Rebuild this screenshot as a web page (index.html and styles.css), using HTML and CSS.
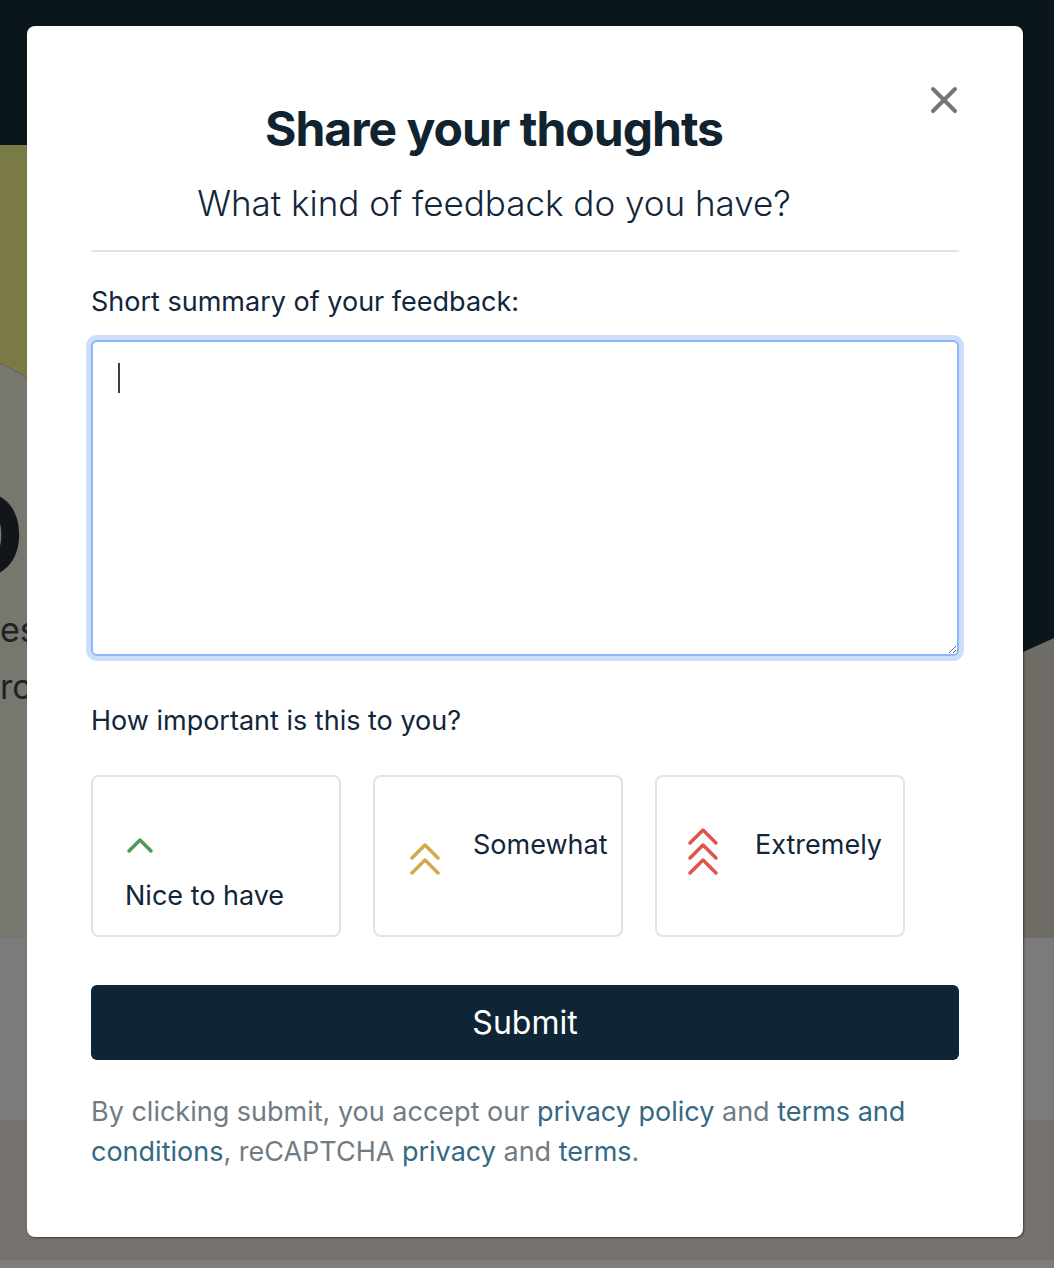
FILE: index.html
```html
<!DOCTYPE html>
<html lang="en">
<head>
<meta charset="utf-8">
<title>Share your thoughts</title>
<link rel="stylesheet" href="styles.css">
</head>
<body>
<div class="page">
  <header class="topbar"></header>
  <section class="hero">
    <svg class="hero-art" width="1054" height="793" viewBox="0 0 1054 793" aria-hidden="true">
      <rect x="0" y="0" width="1054" height="793" fill="#0b151c"/>
      <polygon points="0,0 527,0 527,492 0,218" fill="#797a45"/>
      <polygon points="0,218 527,492 527,793 0,793" fill="#78776f"/>
      <polygon points="527,492 1023,507 1054,493 1054,793 527,793" fill="#6f6b65"/>
    </svg>
    <div class="hero-copy">
      <h1 class="hero-title">D</h1>
      <p class="hero-text">es<br>rc</p>
    </div>
  </section>
  <section class="band band-a"></section>
  <section class="band band-b"></section>
  <section class="band band-c"></section>
</div>

<div class="modal" role="dialog" aria-labelledby="modal-title">
  <div class="modal-header">
    <div class="modal-titles">
      <h2 id="modal-title" class="modal-title">Share your thoughts</h2>
      <p class="modal-subtitle">What kind of feedback do you have?</p>
    </div>
    <button class="close-btn" type="button" aria-label="Close">
      <svg width="28" height="28" viewBox="0 0 28 28"><path d="M3 3 L25 25 M25 3 L3 25" stroke="#767676" stroke-width="4" stroke-linecap="round"/></svg>
    </button>
  </div>
  <hr class="divider">
  <form class="feedback-form">
    <label class="field-label" for="summary">Short summary of your feedback:</label>
    <div class="textarea-wrap">
      <textarea id="summary" class="summary"></textarea>
      <span class="caret"></span>
    </div>
    <p class="field-label field-label-2">How important is this to you?</p>
    <div class="options">
      <div class="option option-stacked">
        <svg class="chev" width="36" height="20" viewBox="0 0 36 20"><polyline points="6,15 17,4 28,15" fill="none" stroke="#4b9a5c" stroke-width="3.5" stroke-linecap="round" stroke-linejoin="round"/></svg>
        <span class="option-text">Nice to have</span>
      </div>
      <div class="option">
        <svg class="chev" width="36" height="48" viewBox="0 0 36 48"><polyline points="7,31 20,18 33,31" fill="none" stroke="#cfa94b" stroke-width="3.5" stroke-linecap="round" stroke-linejoin="round"/><polyline points="7,46 20,33 33,46" fill="none" stroke="#cfa94b" stroke-width="3.5" stroke-linecap="round" stroke-linejoin="round"/></svg>
        <span class="option-text">Somewhat</span>
      </div>
      <div class="option">
        <svg class="chev" width="36" height="48" viewBox="0 0 36 48"><polyline points="3,16 16,3 29,16" fill="none" stroke="#e1544a" stroke-width="3.5" stroke-linecap="round" stroke-linejoin="round"/><polyline points="3,31 16,18 29,31" fill="none" stroke="#e1544a" stroke-width="3.5" stroke-linecap="round" stroke-linejoin="round"/><polyline points="3,46 16,33 29,46" fill="none" stroke="#e1544a" stroke-width="3.5" stroke-linecap="round" stroke-linejoin="round"/></svg>
        <span class="option-text">Extremely</span>
      </div>
    </div>
    <button class="submit-btn" type="button">Submit</button>
    <p class="legal">By clicking submit, you accept our <a href="#">privacy policy</a> and <a href="#">terms and conditions</a>, reCAPTCHA <a href="#">privacy</a> and <a href="#">terms</a>.</p>
  </form>
</div>
</body>
</html>
```

FILE: styles.css
```css
* { box-sizing: border-box; }
html, body { margin: 0; padding: 0; }
body {
  width: 1054px;
  height: 1268px;
  overflow: hidden;
  position: relative;
  font-family: Inter, "Noto Sans", "Liberation Sans", sans-serif;
  color: #12263a;
}

/* background page */
.page { display: flex; flex-direction: column; }
.topbar { height: 145px; background: #0b151c; }
.hero { display: grid; height: 793px; overflow: hidden; }
.hero > * { grid-area: 1 / 1; }
.hero-art { display: block; }
.hero-copy { padding-top: 330px; margin-left: -62px; }
.hero-title {
  margin: 0;
  font-size: 120px;
  line-height: 1;
  font-weight: 700;
  color: #121618;
}
.hero-text {
  margin: 6px 0 0 62px;
  font-size: 34px;
  line-height: 57px;
  color: #1d2224;
}
.band-a { height: 182px; background: #7b7b7b; }
.band-b { height: 140px; background: #75726d; }
.band-c { height: 10px; background: #7d7d7d; }

/* modal */
.modal {
  position: absolute;
  top: 26px;
  left: 27px;
  width: 996px;
  height: 1211px;
  background: #fff;
  border-radius: 8px;
  box-shadow: 1px 1px 2px rgba(0, 0, 0, 0.45);
  padding: 60px 64px 0 64px;
}
.modal-header { display: flex; align-items: flex-start; }
.modal-titles { flex: 1; text-align: center; padding-top: 15px; }
.modal-title {
  margin: 0;
  font-size: 48px;
  line-height: 56px;
  font-weight: 700;
  letter-spacing: -1px;
  color: #10232f;
}
.modal-subtitle {
  margin: 24px 0 0;
  font-size: 35px;
  line-height: 44px;
  font-weight: 300;
  color: #12263a;
}
.close-btn {
  width: 62px;
  height: 28px;
  padding: 0;
  border: 0;
  background: none;
  display: flex;
  justify-content: flex-end;
  cursor: pointer;
}
.close-btn svg { display: block; margin-right: 1px; }
.divider {
  margin: 25px 0 0;
  border: 0;
  height: 2px;
  background: #e1e4e7;
}

.feedback-form { display: flex; flex-direction: column; }
.field-label {
  display: block;
  margin: 30px 0 0;
  font-size: 27px;
  line-height: 40px;
  font-weight: 400;
  color: #12263a;
}
.field-label-2 { margin-top: 45px; }
.textarea-wrap { position: relative; margin-top: 18px; }
.summary {
  display: block;
  width: 868px;
  height: 316px;
  border: 2px solid #8db6f6;
  border-radius: 6px;
  box-shadow: 0 0 0 5px #cddefc;
  outline: none;
  resize: vertical;
  padding: 20px 24px;
  font: inherit;
  font-size: 27px;
}
.caret {
  position: absolute;
  left: 27px;
  top: 23px;
  width: 2px;
  height: 30px;
  background: #3a3d42;
}

.options {
  display: grid;
  grid-template-columns: repeat(3, 250px);
  column-gap: 32px;
  margin-top: 34px;
}
.option {
  height: 162px;
  border: 2px solid #dfe2e6;
  border-radius: 8px;
  display: flex;
  align-items: flex-start;
  padding: 50px 0 0 30px;
}
.option .chev { display: block; flex: none; }
.option-text {
  margin-left: 32px;
  font-size: 27px;
  line-height: 36px;
  color: #12263a;
  white-space: nowrap;
}
.option-stacked { flex-direction: column; padding-top: 59px; }
.option-stacked .option-text { margin: 22px 0 0 2px; }

.submit-btn {
  margin-top: 48px;
  height: 75px;
  width: 100%;
  border: 0;
  border-radius: 6px;
  background: #0f2535;
  color: #fff;
  font-family: inherit;
  font-size: 32px;
  font-weight: 400;
  cursor: pointer;
}
.legal {
  margin: 32px 0 0;
  font-size: 27px;
  line-height: 40px;
  color: #717b83;
  padding-right: 20px;
}
.legal a { color: #346883; text-decoration: none; }
```
